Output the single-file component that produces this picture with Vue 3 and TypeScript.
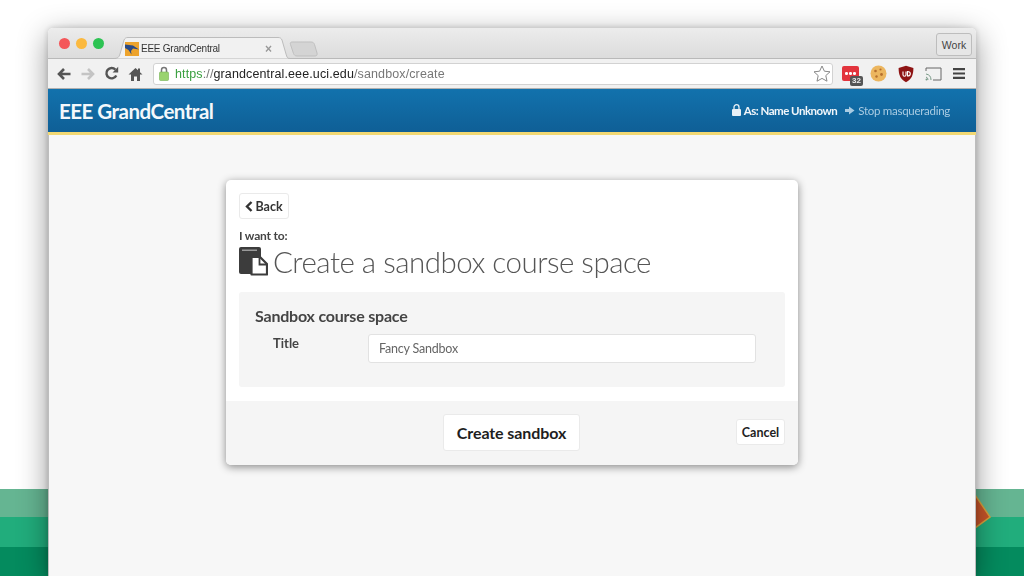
<script setup lang="ts">
const tabTitle: string = 'EEE GrandCentral'
</script>

<template>
  <div class="page">
    <div class="stripes" aria-hidden="true">
      <svg class="diamond" width="18" height="36" viewBox="0 0 18 36"><path d="M0 1 L15 23 L0 34 Z" fill="#c9552a" stroke="#dba23c" stroke-width="1.500"/></svg>
    </div>
    <div class="window">
      <div class="tabbar">
        <div class="lights"><i class="red"></i><i class="amber"></i><i class="green"></i></div>
        <div class="tab">
          <svg class="tab-shape" width="176" height="22" viewBox="0 0 176 22"><path d="M0 21.500C4 21.500 5 20 6 17L10 3C11 1 12 .5 14 .5H164C166 .5 167 1 168 3L172 17C173 20 173 21.500 176 21.500" fill="#f1f1f1" stroke="#bcbcbc"/></svg>
          <svg class="favicon" width="14" height="14" viewBox="0 0 14 14"><rect width="14" height="14" fill="#eda32c"/><path d="M0 2.500 L8 3.500 L14 7.500 L8 6.500 L6 9 L6.500 12.500 L3.500 8 L0 6Z" fill="#2a4a86"/></svg>
          <span class="tab-title">{{ tabTitle }}</span>
          <span class="tab-x">×</span>
        </div>
        <svg class="newtab" width="30" height="16" viewBox="0 0 30 16"><path d="M3 1H22C24 1 25 2 25.500 3.500L28 12C28.500 14 27.500 15 26 15H8C6 15 5.200 14 4.500 12.500L1.500 3.500C1 2 1.500 1 3 1Z" fill="#d4d4d4" stroke="#bfbfbf"/></svg>
        <div class="spacer"></div>
        <div class="work">Work</div>
      </div>
      <div class="toolbar">
        <svg class="tool" width="16" height="14" viewBox="0 0 16 14"><path d="M14.500 7H3M8 2 3 7l5 5" fill="none" stroke="#555" stroke-width="2.600"/></svg>
        <svg class="tool" width="16" height="14" viewBox="0 0 16 14"><path d="M1.500 7H13M8 2l5 5-5 5" fill="none" stroke="#c4c4c4" stroke-width="2.600"/></svg>
        <svg class="tool" width="15" height="15" viewBox="0 0 15 15"><path d="M12.300 9.500A5.200 5.200 0 1 1 11.400 3.600" fill="none" stroke="#555" stroke-width="2.400"/><path d="M8.600 6.400h5.600V.8z" fill="#555"/></svg>
        <svg class="tool home" width="15" height="14" viewBox="0 0 15 14"><path d="M7.500 1 0.500 7.500H3V14h3V9.500h3V14h3V7.500h2.500L12 5.200V1.500h-2v1.800z" fill="#555"/></svg>
        <div class="omnibox">
          <svg width="10" height="15" viewBox="0 0 10 15" class="lock"><path d="M2.500 6V4a2.500 2.500 0 0 1 5 0v2" fill="none" stroke="#777" stroke-width="1.500"/><rect x="0.500" y="6" width="9" height="8.500" rx="1" fill="#9ad36f" stroke="#76b254" stroke-width=".6"/></svg>
          <span class="url"><span class="https">https</span><span class="dim">://</span><span class="host">grandcentral.eee.uci.edu</span><span class="dim">/sandbox/create</span></span>
          <span class="spacer"></span>
          <svg width="18" height="17" viewBox="0 0 18 17"><path d="M9 1l2.400 5.200 5.600.6-4.200 3.800 1.200 5.600L9 13.400 4 16.200l1.200-5.600L1 6.800l5.600-.6z" fill="#fff" stroke="#888" stroke-width="1"/></svg>
        </div>
        <div class="exts">
          <div class="lastpass">
            <i></i><i></i><i></i>
            <span class="badge">32</span>
          </div>
          <svg width="17" height="17" viewBox="0 0 17 17"><circle cx="8.500" cy="8.500" r="8" fill="#ecb65f"/><circle cx="5.500" cy="6" r="1.300" fill="#b5702f"/><circle cx="10.500" cy="4.500" r="1.100" fill="#b5702f"/><circle cx="11.500" cy="9.500" r="1.400" fill="#b5702f"/><circle cx="6.500" cy="11.500" r="1.200" fill="#b5702f"/></svg>
          <svg width="16" height="18" viewBox="0 0 16 18"><path d="M8 .8 15.400 3c0 7-1.800 11.500-7.400 14.200C2.400 14.500.6 10 .6 3z" fill="#8e1414"/><path d="M5 6.500v3.200a1.500 1.500 0 0 0 3 0V6.500M9.500 6.500v4.500c2.400 0 2.800-1 2.800-2.300S11.700 6.500 9.500 6.500z" fill="none" stroke="#fff" stroke-width="1.100"/></svg>
          <svg width="17" height="14" viewBox="0 0 17 14"><path d="M1 4V1h15v12H8" fill="none" stroke="#666" stroke-width="1"/><path d="M1 7a6 6 0 0 1 5 6M1 10a3 3 0 0 1 2 3" fill="none" stroke="#7a9a88" stroke-width="1"/><circle cx="1.500" cy="12.500" r="1" fill="#7a9a88"/></svg>
          <svg width="12" height="11" viewBox="0 0 12 11"><path d="M0 1.200h12M0 5.500h12M0 9.800h12" stroke="#444" stroke-width="2.200"/></svg>
        </div>
      </div>
      <header class="appbar">
        <div class="brand">EEE GrandCentral</div>
        <div class="spacer"></div>
        <div class="masq">
          <svg width="9" height="12" viewBox="0 0 9 12"><path d="M2 5.500V3.200a2.500 2.500 0 0 1 5 0v2.300" fill="none" stroke="#e8f0f6" stroke-width="1.300"/><rect y="5" width="9" height="7" rx="1" fill="#e8f0f6"/></svg>
          <span class="as">As: Name Unknown</span>
          <svg class="exit" width="10" height="9" viewBox="0 0 10 9"><path d="M0 3h4V.5L9.500 4.500 4 8.500V6H0z" fill="#a9cbe2"/></svg>
          <span class="stop">Stop masquerading</span>
        </div>
      </header>
      <main class="content">
        <section class="card">
          <div class="card-body">
            <button class="btn back" type="button">
              <svg width="8" height="11" viewBox="0 0 8 11"><path d="M6.500 1 2 5.500 6.500 10" fill="none" stroke="#333" stroke-width="2.400"/></svg>
              Back
            </button>
            <div class="want">I want to:</div>
            <h1 class="title">
              <svg width="29" height="29" viewBox="0 0 29 29"><rect x="0" y="0" width="22" height="27" rx="2" fill="#3c3c3c"/><rect x="3" y="2.500" width="15" height="1.500" fill="#9a9a9a"/><path d="M12.500 10H21L28 17V27.500H12.500Z" fill="#fff" stroke="#3c3c3c" stroke-width="2.200" stroke-linejoin="round"/><path d="M20.500 10.500V17.500H27.500" fill="none" stroke="#3c3c3c" stroke-width="1.800"/></svg>
              <span>Create a sandbox course space</span>
            </h1>
            <div class="panel">
              <h2 class="panel-title">Sandbox course space</h2>
              <div class="field">
                <label class="label" for="sb-title">Title</label>
                <input id="sb-title" class="input" type="text" value="Fancy Sandbox" />
              </div>
            </div>
          </div>
          <footer class="card-foot">
            <button class="btn create" type="button">Create sandbox</button>
            <button class="btn cancel" type="button">Cancel</button>
          </footer>
        </section>
      </main>
    </div>
  </div>
</template>

<style>
html, body { margin: 0; padding: 0; }
</style>

<style scoped>
.page {
  position: relative;
  width: 1024px;
  height: 576px;
  overflow: hidden;
  padding: 28px 48px 0 48px;
  box-sizing: border-box;
  font-family: Lato, "Liberation Sans", sans-serif;
  background: #ffffff;
}
.stripes {
  position: absolute;
  left: 0; right: 0; bottom: 0;
  height: 87px;
  background: linear-gradient(#65b592 0 28px, #21ad7c 28px 58px, #048b5e 58px);
}
.diamond { position: absolute; left: 975px; top: 5px; }
.window {
  position: relative;
  width: 928px;
  height: 548px;
  display: flex;
  flex-direction: column;
  border-radius: 5px 5px 0 0;
  overflow: hidden;
  box-shadow: 0 8px 30px rgba(0,0,0,.42), 0 0 6px rgba(0,0,0,.18);
  filter: blur(.35px);
}
.spacer { flex: 1; }
.tabbar {
  height: 31px;
  display: flex;
  align-items: flex-end;
  background: linear-gradient(#ececec, #dcdcdc);
  border-bottom: 1px solid #b9b9b9;
  box-sizing: border-box;
}
.lights { display: flex; gap: 6px; align-self: flex-start; margin: 10px 0 0 11px; }
.lights i { width: 11px; height: 11px; border-radius: 50%; display: block; }
.red { background: #f4575a; }
.amber { background: #fbb93f; }
.green { background: #2dc353; }
.tab {
  position: relative;
  width: 176px;
  height: 22px;
  margin-left: 10px;
  margin-bottom: -1px;
  display: flex;
  align-items: center;
  padding: 1px 18px 0 11px;
  box-sizing: border-box;
}
.tab-shape { position: absolute; left: 0; top: 0; }
.favicon { position: relative; flex: none; }
.tab-title { position: relative; font: 10px "Liberation Sans", sans-serif; letter-spacing: -.25px; color: #333; margin-left: 2px; white-space: nowrap; }
.tab-x { position: relative; margin-left: auto; font: bold 12px "Liberation Sans", sans-serif; color: #999; }
.newtab { margin: 0 0 1px -1px; flex: none; }
.work {
  align-self: flex-start;
  margin: 5px 4px 0 0;
  width: 36px;
  height: 23px;
  text-align: center;
  font: 10.5px/22px "Liberation Sans", sans-serif;
  color: #444;
  background: #e6e6e6;
  border: 1px solid #bdbdbd;
  border-radius: 3px;
  box-sizing: border-box;
}
.toolbar {
  height: 30px;
  display: flex;
  align-items: center;
  background: #f1f1f1;
  border-bottom: 1px solid #b0b0b0;
  box-sizing: border-box;
  padding: 0 8px;
}
.tool { margin-right: 8px; flex: none; }
.home { margin-left: 1px; margin-right: 10px; }
.omnibox {
  width: 680px;
  height: 22px;
  display: flex;
  align-items: center;
  background: #fff;
  border: 1px solid #d2d2d2;
  border-radius: 3px;
  padding: 0 1px 0 5px;
  box-sizing: border-box;
}
.url { font: 12.5px "Liberation Sans", sans-serif; margin-left: 6px; white-space: nowrap; letter-spacing: .12px; }
.https { color: #3aa040; }
.dim { color: #777; }
.host { color: #222; }
.exts { display: flex; align-items: center; gap: 11px; margin-left: 9px; }
.lastpass {
  position: relative;
  width: 17px;
  height: 15px;
  border-radius: 2px;
  background: #e2343d;
  display: flex;
  align-items: center;
  justify-content: center;
  gap: 1.500px;
}
.lastpass i { width: 2.500px; height: 2.500px; border-radius: 50%; background: #fff; display: block; }
.badge {
  position: absolute;
  left: 8px;
  top: 10px;
  width: 13px;
  height: 10px;
  text-align: center;
  background: #555;
  color: #eee;
  border-radius: 2px;
  font: bold 8px/10px "Liberation Sans", sans-serif;
}
.appbar {
  height: 46px;
  box-sizing: border-box;
  display: flex;
  align-items: center;
  padding: 0 26px 0 11px;
  background: linear-gradient(#1272ad, #0f5f96);
  border-bottom: 3px solid #f2d873;
}
.brand { font-size: 20.500px; font-weight: 700; color: #f4f8fb; letter-spacing: -.5px; }
.masq { display: flex; align-items: center; font-size: 11.500px; margin-bottom: 1px; }
.as { margin-left: 3px; color: #f1f6fa; font-weight: 700; letter-spacing: -.5px; }
.exit { margin-left: 8px; }
.stop { margin-left: 3px; color: #a9cbe2; letter-spacing: -.28px; }
.content {
  flex: 1;
  background: #f7f7f7;
  padding-top: 45px;
  display: flex;
  justify-content: center;
  align-items: flex-start;
  border-left: 1px solid #bdbdbd;
  border-right: 1px solid #bdbdbd;
}
.card {
  width: 572px;
  height: 285px;
  display: flex;
  flex-direction: column;
  background: #fff;
  border-radius: 5px;
  box-shadow: 0 2px 8px rgba(0,0,0,.45);
}
.card-body { padding: 13px 13px 0; height: 221px; box-sizing: border-box; }
.btn {
  display: block;
  box-sizing: border-box;
  background: #fff;
  border: 1px solid #eaeaea;
  border-radius: 3px;
  font-family: Lato, sans-serif;
  font-weight: 700;
  padding: 0;
  color: #333;
}
.back {
  width: 50px;
  height: 26px;
  font-size: 12.500px;
  display: flex;
  align-items: center;
  justify-content: center;
  gap: 2px;
}
.want { margin-top: 9px; font-size: 12px; font-weight: 700; color: #444; line-height: 15px; letter-spacing: -.2px; }
.title {
  margin: 2px 0 0;
  height: 33px;
  display: flex;
  align-items: center;
  gap: 5px;
  font-size: 29.500px;
  font-weight: 300;
  color: #555;
  line-height: 33px;
  letter-spacing: -.5px;
  white-space: nowrap;
}
.panel {
  margin-top: 14px;
  height: 95px;
  box-sizing: border-box;
  background: #f5f5f5;
  border-radius: 3px;
  padding: 15px 29px 0 16px;
}
.panel-title { margin: 0; font-size: 16px; font-weight: 700; color: #444; line-height: 18px; letter-spacing: -.2px; }
.field { display: flex; align-items: flex-start; margin-top: 9px; }
.label { width: 96px; margin-left: 18px; font-size: 13px; font-weight: 700; color: #444; line-height: 18px; }
.input {
  width: 388px;
  height: 29px;
  flex: none;
  box-sizing: border-box;
  background: #fff;
  border: 1px solid #e2e2e2;
  border-radius: 3px;
  padding: 0 10px;
  font: 12.500px Lato, sans-serif;
  letter-spacing: -.2px;
  color: #666;
}
.card-foot {
  position: relative;
  height: 64px;
  display: flex;
  align-items: center;
  justify-content: flex-end;
  padding: 0 13px;
  background: #f5f5f5;
  border-radius: 0 0 5px 5px;
}
.create {
  position: absolute;
  left: 217px;
  top: 13px;
  width: 137px;
  height: 37px;
  font-size: 16px;
  color: #1e1e1e;
  letter-spacing: -.1px;
}
.cancel { width: 49px; height: 26px; margin-bottom: 2px; font-size: 12.500px; color: #222; }
</style>
